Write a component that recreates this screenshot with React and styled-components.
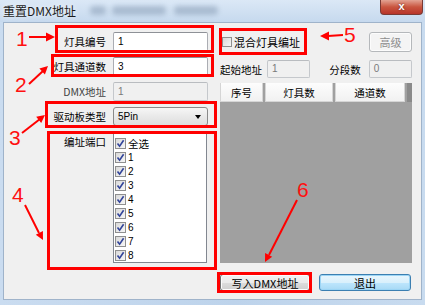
import styled, { createGlobalStyle } from "styled-components";

const GlobalStyle = createGlobalStyle`
  body {
    margin: 0;
    background: #fff;
    font-family: "Noto Sans CJK SC", "Liberation Sans", sans-serif;
  }
`;

const Window = styled.div`
  position: relative;
  width: 425px;
  height: 305px;
  display: flex;
  flex-direction: column;
  background: linear-gradient(to right, #cadcf0, #bdd3eb 55%, #c8dbef);
  overflow: hidden;
`;

const TitleBar = styled.div`
  height: 22px;
  display: flex;
  align-items: flex-start;
  background: linear-gradient(to bottom, #dbe8f6, #c6d9ee);
`;

const Title = styled.div`
  font-size: 12px;
  line-height: 22px;
  padding-left: 3px;
  color: #1b1b1b;
  text-shadow: 0 0 6px #fff;
`;

const Blur = styled.span`
  margin-top: 6px;
  margin-left: ${(p) => p.$gap}px;
  width: ${(p) => p.$w}px;
  height: 9px;
  border-radius: 4px;
  background: #8fa3bb;
  filter: blur(2.5px);
  opacity: 0.6;
`;

const CloseButton = styled.div`
  margin-left: auto;
  margin-right: 2px;
  width: 41px;
  height: 14px;
  border: 1px solid #7a3a34;
  border-top: none;
  border-radius: 0 0 4px 4px;
  background: linear-gradient(to bottom, #e3a393, #c9553f 50%, #b8352a);
  color: #fff;
  font: bold 11px/13px "Liberation Sans", sans-serif;
  text-align: center;
  text-shadow: 0 0 2px #5a1a10;
`;

const Client = styled.div`
  flex: 1;
  margin: 0 3px 5px 3px;
  background: #f0f0f0;
  border: 1px solid #9fb3ca;
  display: flex;
  font-size: 10.5px;
  color: #000;
`;

const Form = styled.div`
  display: grid;
  grid-template-columns: 102px 95px;
  grid-template-rows: repeat(4, 19px) 131px;
  column-gap: 7px;
  row-gap: 6px;
  padding-top: 9px;
`;

const Label = styled.div`
  justify-self: end;
  align-self: ${(p) => (p.$top ? "start" : "center")};
  padding-top: ${(p) => (p.$top ? 2 : 0)}px;
  white-space: nowrap;
  color: ${(p) => (p.$dim ? "#444" : "#000")};
`;

const TextBox = styled.div`
  box-sizing: border-box;
  width: ${(p) => p.$w || 95}px;
  height: ${(p) => p.$h || 19}px;
  border: 1px solid ${(p) => (p.$disabled ? "#c5c8cc" : "#abadb3")};
  border-top-color: ${(p) => (p.$disabled ? "#b9bcc0" : "#8e9197")};
  border-radius: 2px;
  background: ${(p) => (p.$disabled ? "#f0f0f0" : "#fff")};
  color: ${(p) => (p.$disabled ? "#7a7a7a" : "#000")};
  font: 10px/1 "Liberation Sans", sans-serif;
  padding-left: 4px;
  display: flex;
  align-items: center;
`;

const Select = styled.div`
  box-sizing: border-box;
  width: 95px;
  height: 19px;
  border: 1px solid #8a8a8a;
  border-radius: 3px;
  background: linear-gradient(to bottom, #f6f6f6, #e9e9e9 50%, #dedede);
  font: 10px/1 "Liberation Sans", sans-serif;
  padding: 0 6px 0 4px;
  display: flex;
  align-items: center;
  justify-content: space-between;
`;

const Caret = styled.span`
  width: 0;
  height: 0;
  border-left: 3.5px solid transparent;
  border-right: 3.5px solid transparent;
  border-top: 4px solid #000;
`;

const ListBox = styled.div`
  box-sizing: border-box;
  width: 94px;
  border: 1px solid #828790;
  background: #fff;
  padding-top: 3px;
  padding-left: 1px;
`;

const ListItem = styled.div`
  height: 14px;
  display: flex;
  align-items: center;
  gap: 2px;
  font-size: ${(p) => (p.$cjk ? 10.5 : 10)}px;
  font-family: ${(p) =>
    p.$cjk ? `"Noto Sans CJK SC", sans-serif` : `"Liberation Sans", sans-serif`};
`;

const Box = styled.span`
  box-sizing: border-box;
  width: ${(p) => p.$size || 11}px;
  height: ${(p) => p.$size || 11}px;
  border: 1px solid #8f8f8f;
  background: linear-gradient(135deg, #d9d9d9, #f7f7f7);
  display: flex;
  align-items: center;
  justify-content: center;
  flex-shrink: 0;
`;

const Check = () => (
  <svg width="9" height="9" viewBox="0 0 9 9">
    <path d="M1.5 4.5 L3.6 7.2 L7.6 1.2" fill="none" stroke="#32449a" strokeWidth="1.6" />
  </svg>
);

const CheckItem = ({ text, cjk }) => (
  <ListItem $cjk={cjk}>
    <Box>
      <Check />
    </Box>
    {text}
  </ListItem>
);

const Side = styled.div`
  margin-left: 12px;
  width: 192px;
  display: flex;
  flex-direction: column;
  padding-top: 9px;
`;

const TopRow = styled.div`
  height: 20px;
  display: flex;
  align-items: center;
  justify-content: space-between;
`;

const MixLabel = styled.div`
  display: flex;
  align-items: center;
  gap: 2px;
  padding-left: 2px;
  font-size: 11px;
`;

const Button = styled.div`
  box-sizing: border-box;
  width: ${(p) => p.$w}px;
  height: ${(p) => p.$h || 17}px;
  border: 1px solid ${(p) => (p.$disabled ? "#b5b8bb" : p.$default ? "#3c7fb1" : "#707070")};
  border-radius: 3px;
  background: ${(p) =>
    p.$disabled
      ? "#f4f4f4"
      : p.$default
      ? "linear-gradient(to bottom, #e9f6fd, #d9f0fc 50%, #bee6fd 51%, #a7d9f5)"
      : "linear-gradient(to bottom, #f2f2f2, #ebebeb 50%, #dddddd 51%, #cfcfcf)"};
  box-shadow: ${(p) => (p.$default ? "0 0 0 1px #9cd5f5 inset" : "0 0 0 1px #fcfcfc inset")};
  color: ${(p) => (p.$disabled ? "#8d8d8d" : "#000")};
  font-size: 11px;
  display: flex;
  align-items: center;
  justify-content: center;
`;

const FieldRow = styled.div`
  margin-top: 8px;
  height: 18px;
  display: flex;
  align-items: center;
`;

const FieldLabel = styled.span`
  margin-left: ${(p) => p.$ml || 0}px;
  margin-right: ${(p) => p.$mr}px;
  white-space: nowrap;
`;

const Grid = styled.div`
  margin-top: 5px;
  height: 180px;
  background: #a0a0a0;
  display: flex;
  flex-direction: column;
`;

const HeaderRow = styled.div`
  display: flex;
  gap: 2px;
  height: 19px;
`;

const HeaderCell = styled.div`
  box-sizing: border-box;
  width: ${(p) => p.$w}px;
  background: linear-gradient(to bottom, #fdfdfd, #f1f1f1);
  border: 1px solid #d5d5d5;
  border-top: none;
  display: flex;
  align-items: center;
  justify-content: center;
  font-size: 10.5px;
`;

const HeaderRest = styled.div`
  width: 5px;
  background: #8a8a8a;
`;

const ButtonRow = styled.div`
  margin-top: 11px;
  display: flex;
  gap: 9px;
`;

const Overlay = styled.svg`
  position: absolute;
  left: 0;
  top: 0;
  pointer-events: none;
`;

const Num = styled.text`
  font: 21px "Liberation Sans", sans-serif;
  fill: #ff1010;
`;

const boxes = [
  [56.5, 26.5, 156, 25],
  [52.5, 55.5, 160, 20],
  [46.5, 102.5, 169, 24],
  [48.5, 132.5, 167, 136],
  [220.5, 29.5, 85, 24],
  [218.5, 273.5, 92, 18],
];

const arrows = [
  { line: "29,37 48,37", head: "55,37 46,32.5 46,41.5" },
  { line: "29,84 43,71", head: "48,66 44.9,74.4 39.4,68.6" },
  { line: "22,133 40,119", head: "45,115 41.2,123.1 36.2,116.8" },
  { line: "25,205 39,233", head: "43,240 42.9,231.1 35.8,234.7" },
  { line: "343,35 328,36", head: "320,36 329,31.5 329,40.5" },
  { line: "297,200 269,255", head: "265,262 272.2,256.7 265.1,253.1" },
];

const nums = [
  ["1", 16, 46],
  ["2", 15, 92],
  ["3", 9, 145],
  ["4", 12, 202],
  ["5", 344, 42],
  ["6", 297, 197],
];

export default function App() {
  return (
    <>
      <GlobalStyle />
      <Window>
        <TitleBar>
          <Title>重置DMX地址</Title>
          <Blur $gap={14} $w={16} />
          <Blur $gap={6} $w={54} />
          <Blur $gap={8} $w={44} />
          <CloseButton>x</CloseButton>
        </TitleBar>
        <Client>
          <Form>
            <Label>灯具编号</Label>
            <TextBox>1</TextBox>
            <Label>灯具通道数</Label>
            <TextBox>3</TextBox>
            <Label $dim>DMX地址</Label>
            <TextBox $disabled>1</TextBox>
            <Label>驱动板类型</Label>
            <Select>
              5Pin
              <Caret />
            </Select>
            <Label $top>编址端口</Label>
            <ListBox>
              <CheckItem text="全选" cjk />
              {["1", "2", "3", "4", "5", "6", "7", "8"].map((n) => (
                <CheckItem key={n} text={n} />
              ))}
            </ListBox>
          </Form>
          <Side>
            <TopRow>
              <MixLabel>
                <Box $size={10} />
                混合灯具编址
              </MixLabel>
              <Button $w={43} $h={20} $disabled>
                高级
              </Button>
            </TopRow>
            <FieldRow>
              <FieldLabel $mr={5}>起始地址</FieldLabel>
              <TextBox $w={44} $h={18} $disabled>
                1
              </TextBox>
              <FieldLabel $ml={19} $mr={8}>
                分段数
              </FieldLabel>
              <TextBox $w={44} $h={18} $disabled>
                0
              </TextBox>
            </FieldRow>
            <Grid>
              <HeaderRow>
                <HeaderCell $w={43}>序号</HeaderCell>
                <HeaderCell $w={68}>灯具数</HeaderCell>
                <HeaderCell $w={70}>通道数</HeaderCell>
                <HeaderRest />
              </HeaderRow>
            </Grid>
            <ButtonRow>
              <Button $w={90}>写入DMX地址</Button>
              <Button $w={92} $default>
                退出
              </Button>
            </ButtonRow>
          </Side>
        </Client>
        <Overlay width="425" height="305" viewBox="0 0 425 305">
          {boxes.map(([x, y, w, h], i) => (
            <rect key={i} x={x} y={y} width={w} height={h} fill="none" stroke="#ff0000" strokeWidth="3" />
          ))}
          {arrows.map((a, i) => (
            <g key={i}>
              <polyline points={a.line} fill="none" stroke="#ff0000" strokeWidth="2" />
              <polygon points={a.head} fill="#ff0000" />
            </g>
          ))}
          {nums.map(([t, x, y]) => (
            <Num key={t} x={x} y={y}>
              {t}
            </Num>
          ))}
        </Overlay>
      </Window>
    </>
  );
}
